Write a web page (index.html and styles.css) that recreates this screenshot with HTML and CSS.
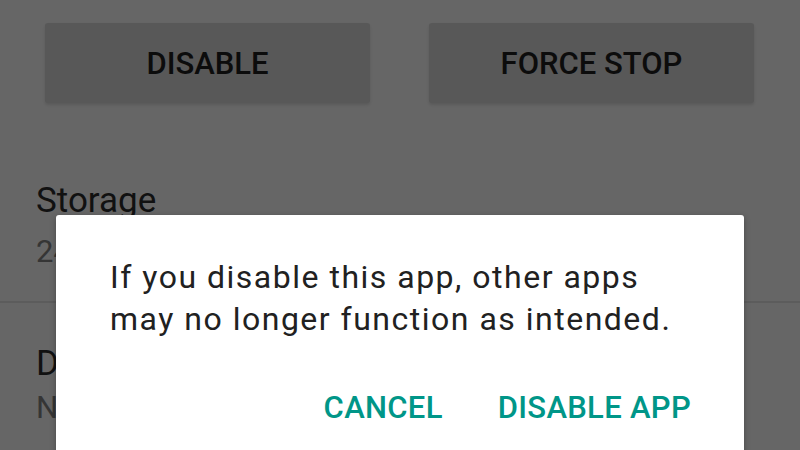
FILE: index.html
```html
<!DOCTYPE html>
<html>
<head>
	<meta charset="utf-8">
	<title>App info</title>
	<link rel="stylesheet" href="styles.css">
</head>
<body>
	<screen>
		<actions>
			<button class="flat">DISABLE</button>
			<button class="flat">FORCE STOP</button>
		</actions>

		<section class="item first">
			<h3>Storage</h3>
			<p>24.00 MB used in internal storage</p>
		</section>

		<section class="item">
			<h3>Data usage</h3>
			<p>No data used</p>
		</section>

		<dialog open>
			<p class="message">If you disable this app, other apps<br>may no longer function as intended.</p>
			<footer>
				<a class="action">CANCEL</a>
				<a class="action">DISABLE APP</a>
			</footer>
		</dialog>
	</screen>
</body>
</html>
```

FILE: styles.css
```css
body{
	margin: 0px;
	padding: 0px;
	background: #666;
	font-family: Roboto, "Noto Sans", sans-serif;
}

screen{
	display: block;
	position: relative;
	width: 800px;
	height: 450px;
	overflow: hidden;
	background: #666;
}

actions{
	display: flex;
	justify-content: space-between;
	padding: 23px 46px 0px 45px;
}

button.flat{
	width: 325px;
	height: 80px;
	border: none;
	border-radius: 3px;
	background: #585858;
	box-shadow: 0px 2px 3px rgba(0,0,0,0.12);
	font-family: Roboto, sans-serif;
	font-weight: 500;
	font-size: 31px;
	color: #0c0c0c;
	padding: 0px;
}

.item{
	padding: 0px 36px;
	height: 130px;
	box-sizing: border-box;
}

.item.first{
	margin-top: 78px;
	height: 122px;
	border-bottom: 2px solid #5c5c5c;
	padding-top: 0px;
}

.item h3{
	margin: 0px;
	font-weight: normal;
	font-size: 35px;
	line-height: 40px;
	color: #111;
}

.item p{
	margin: 14px 0px 0px 0px;
	font-size: 31px;
	line-height: 34px;
	color: #353535;
	white-space: nowrap;
}

.item + .item{
	padding-top: 41px;
}

.item + .item p{
	margin-top: 7px;
}

dialog{
	position: absolute;
	top: 215px;
	left: 56px;
	width: 688px;
	height: 260px;
	margin: 0px;
	padding: 0px;
	border: none;
	border-radius: 3px;
	background: #fff;
	box-shadow: 0px 2px 6px rgba(0,0,0,0.3);
	box-sizing: border-box;
}

.message{
	margin: 0px;
	padding: 41px 20px 0px 54px;
	font-size: 32px;
	letter-spacing: 1.5px;
	line-height: 42px;
	color: #212121;
	white-space: nowrap;
}

footer{
	display: flex;
	justify-content: flex-end;
	gap: 55px;
	padding: 49px 53px 0px 0px;
}

.action{
	font-weight: 500;
	font-size: 31px;
	letter-spacing: 0.3px;
	color: #009688;
}
```
